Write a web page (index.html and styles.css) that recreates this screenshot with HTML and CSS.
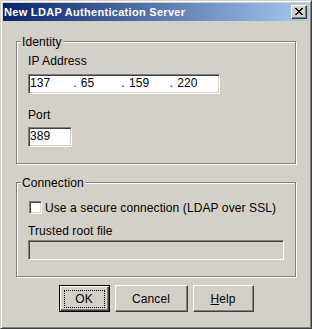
FILE: index.html
```html
<!DOCTYPE html>
<html lang="en">
<head>
    <meta charset="UTF-8">
    <title>New LDAP Authentication Server</title>
    <link rel="stylesheet" href="styles.css">
</head>
<body>

    <div class="window">
        <!-- Title bar -->
        <div class="titlebar">
            <span class="title">New LDAP Authentication Server</span>
            <span class="close">
                <svg width="8" height="7" viewBox="0 0 8 7"><path fill="#000" d="M0 0h2v1H0zM6 0h2v1H6zM1 1h2v1H1zM5 1h2v1H5zM2 2h4v1H2zM3 3h2v1H3zM2 4h4v1H2zM1 5h2v1H1zM5 5h2v1H5zM0 6h2v1H0zM6 6h2v1H6z"/></svg>
            </span>
        </div>

        <div class="content">
            <!-- Identity -->
            <div class="group group-identity">
                <div class="legend">Identity</div>
                <div class="label label-ip">IP Address</div>
                <div class="field field-ip">
                    <span class="seg seg-first">137</span><span class="seg">.<span class="num">65</span></span><span class="seg">.<span class="num">159</span></span><span class="seg">.<span class="num">220</span></span>
                </div>
                <div class="label label-port">Port</div>
                <div class="field field-port">389</div>
            </div>

            <!-- Connection -->
            <div class="group group-connection">
                <div class="legend">Connection</div>
                <div class="check-row">
                    <span class="checkbox"></span>
                    <span class="check-text">Use a secure connection (LDAP over SSL)</span>
                </div>
                <div class="label label-root">Trusted root file</div>
                <div class="field field-disabled"></div>
            </div>

            <!-- Buttons -->
            <div class="buttons">
                <button class="btn btn-default btn-ok"><span class="focus">OK</span></button>
                <button class="btn btn-cancel">Cancel</button>
                <button class="btn btn-help"><u>H</u>elp</button>
            </div>
        </div>
    </div>

</body>
</html>
```

FILE: styles.css
```css
/* Reset */
* { margin: 0; padding: 0; box-sizing: border-box; }
body { font-family: "Liberation Sans", Arial, sans-serif; font-size: 12px; line-height: 14px; letter-spacing: 0.1px; color: #000; background-color: #d4d0c8; }

/* Window frame */
.window { width: 312px; height: 329px; display: flex; flex-direction: column; padding: 2px; background-color: #d4d0c8; border: 1px solid; border-color: #d4d0c8 #404040 #404040 #d4d0c8; box-shadow: inset 1px 1px #fff, inset -1px -1px #808080; }

/* Title bar */
.titlebar { height: 18px; display: flex; align-items: center; justify-content: space-between; padding: 0 2px 0 1px; background: linear-gradient(to right, #0a246a, #a6caf0); }
.title { color: #fff; font-weight: bold; font-size: 11px; line-height: 18px; letter-spacing: 0.3px; }
.close { width: 16px; height: 14px; display: flex; padding: 2px 0 0 3px; background-color: #d4d0c8; border: 1px solid; border-color: #fff #404040 #404040 #fff; box-shadow: inset -1px -1px #808080; }

/* Body */
.content { padding: 20px 13px 0; }

/* Group boxes */
.group { border: 1px solid #808080; box-shadow: 1px 1px #fff, inset 1px 1px #fff; padding: 0 11px 16px; }
.group-connection { margin-top: 18px; }
.legend { width: max-content; margin: -7px 0 0 -7px; padding: 0 1px; background-color: #d4d0c8; }

.label-ip { margin-top: 5px; }
.label-port { margin-top: 14px; }
.label-root { margin-top: 9px; }

/* Edit fields */
.field { height: 20px; padding: 1px; background-color: #fff; white-space: nowrap; border: 1px solid; border-color: #808080 #fff #fff #808080; box-shadow: inset 1px 1px #404040, inset -1px -1px #d4d0c8; }
.field-ip { width: 192px; margin-top: 6px; display: flex; }
.field-port { width: 44px; margin-top: 5px; }
.field-disabled { margin-top: 2px; background-color: #d4d0c8; }

.seg { display: inline-block; width: 49px; }
.seg-first { width: 44px; }
.num { margin-left: 4px; }

/* Checkbox */
.check-row { display: flex; align-items: flex-start; margin-top: 10px; }
.checkbox { width: 13px; height: 13px; margin: 1px 3px 0 1px; background-color: #fff; border: 1px solid; border-color: #808080 #fff #fff #808080; box-shadow: inset 1px 1px #404040, inset -1px -1px #d4d0c8; }
.check-text { padding-top: 1px; }

/* Buttons */
.buttons { display: flex; justify-content: center; gap: 5px; margin-top: 8px; }
.btn { height: 27px; font-family: inherit; font-size: 12px; line-height: 14px; letter-spacing: 0.1px; color: #000; background-color: #d4d0c8; border: 1px solid; border-color: #fff #404040 #404040 #fff; box-shadow: inset -1px -1px #808080; }
.btn-default { border-color: #000; box-shadow: inset 1px 1px #fff, inset -1px -1px #404040, inset -2px -2px #808080; display: flex; padding: 4px 4px 3px; }
.focus { flex: 1; display: flex; align-items: center; justify-content: center; border: 1px dotted #000; }
.btn-ok { width: 51px; }
.btn-cancel { width: 73px; }
.btn-help { width: 61px; }
```
